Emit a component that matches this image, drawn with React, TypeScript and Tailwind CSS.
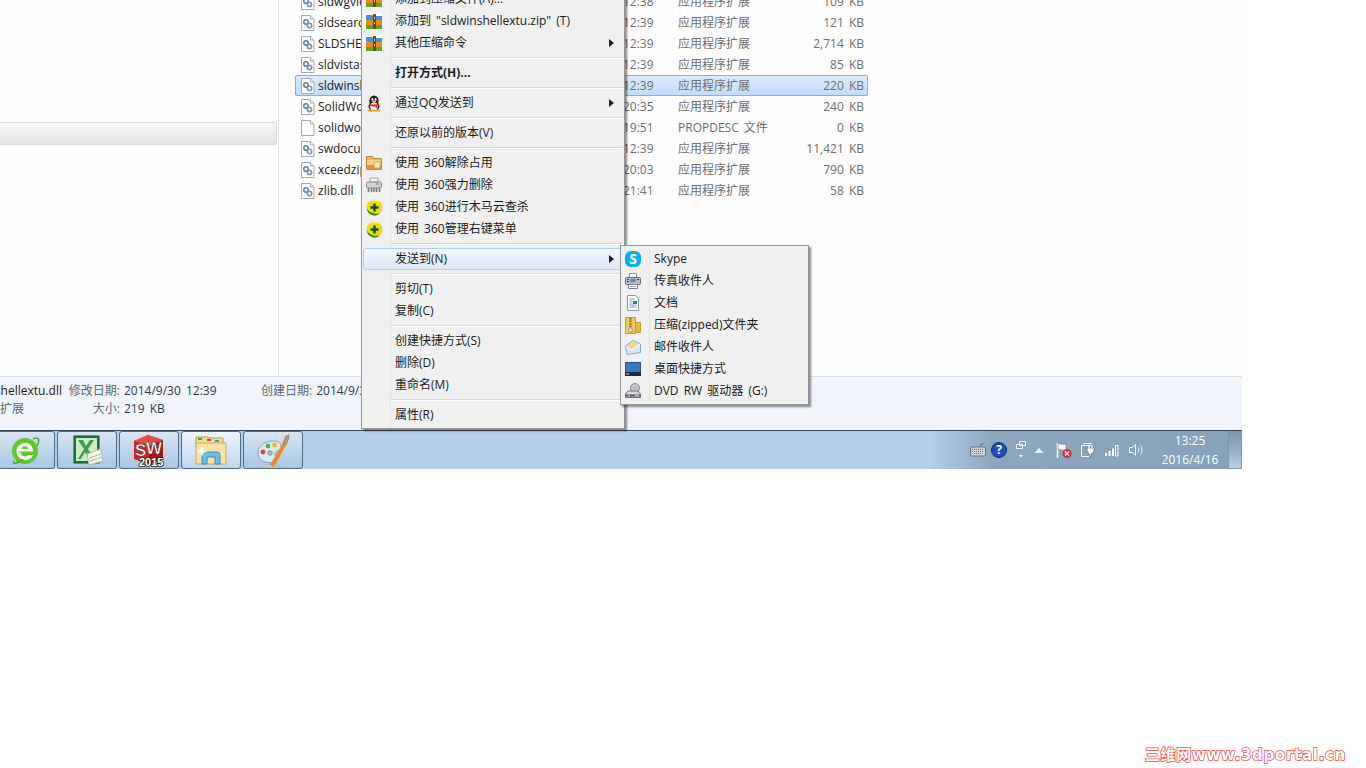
import type { ReactNode } from "react";

const files = [
  { name: "sldwgviewer.dll", time: "2014/9/30 12:38", type: "应用程序扩展", size: "109 KB" },
  { name: "sldsearchhost.dll", time: "2014/9/30 12:39", type: "应用程序扩展", size: "121 KB" },
  { name: "SLDSHELLEXTU.dll", time: "2014/9/30 12:39", type: "应用程序扩展", size: "2,714 KB" },
  { name: "sldvistashell.dll", time: "2014/9/30 12:39", type: "应用程序扩展", size: "85 KB" },
  { name: "sldwinshellextu.dll", time: "2014/9/30 12:39", type: "应用程序扩展", size: "220 KB", selected: true },
  { name: "SolidWorks.dll", time: "2014/8/12 20:35", type: "应用程序扩展", size: "240 KB" },
  { name: "solidworks.propdesc", time: "2014/6/18 19:51", type: "PROPDESC 文件", size: "0 KB", blank: true },
  { name: "swdocumentmgr.dll", time: "2014/9/30 12:39", type: "应用程序扩展", size: "11,421 KB" },
  { name: "xceedzip.dll", time: "2013/7/11 20:03", type: "应用程序扩展", size: "790 KB" },
  { name: "zlib.dll", time: "2012/5/21 21:41", type: "应用程序扩展", size: "58 KB" },
];

function FileIcon({ blank }: { blank?: boolean }) {
  return (
    <svg width="16" height="16" viewBox="0 0 16 16" className="shrink-0">
      <path d="M.5 .5h9l3.500 3.500v11.500H.5z" fill="#fff" stroke="#a3a9b0" />
      <path d="M9.500 .5v3.500h3.500" fill="#eef1f4" stroke="#a3a9b0" />
      {!blank && (
        <g fill="none" strokeLinecap="round">
          <circle cx="5" cy="7" r="2.200" stroke="#5b7a9c" strokeWidth="1.500" />
          <circle cx="8.500" cy="10.500" r="2.200" stroke="#7c8fa6" strokeWidth="1.500" />
          <circle cx="5" cy="7" r=".6" fill="#dbe7f3" />
        </g>
      )}
    </svg>
  );
}

function RarIcon() {
  return (
    <svg width="16" height="16" viewBox="0 0 16 16">
      <rect x="0" y="0" width="16" height="16" fill="#fdfdfd" />
      <path d="M0 2h6l1 1h9v4H0z" fill="#3f94d8" />
      <rect y="7" width="16" height="5" fill="#e98a25" />
      <rect y="12" width="16" height="4" fill="#5da52a" />
      <rect x="7" y="1" width="3" height="15" fill="#6d4a23" />
      <rect x="8" y="4" width="1" height="2" fill="#e7c98f" />
      <rect x="8" y="9" width="1" height="2" fill="#e7c98f" />
    </svg>
  );
}

function QQIcon() {
  return (
    <svg width="16" height="17" viewBox="0 0 16 17">
      <ellipse cx="8" cy="6" rx="4.600" ry="5.600" fill="#1c1c1c" />
      <ellipse cx="8" cy="11.500" rx="5.500" ry="4.500" fill="#222" />
      <ellipse cx="8" cy="11.500" rx="3.800" ry="4" fill="#fff" />
      <ellipse cx="6.400" cy="4.400" rx="1" ry="1.300" fill="#fff" />
      <ellipse cx="9.600" cy="4.400" rx="1" ry="1.300" fill="#fff" />
      <ellipse cx="8" cy="6.400" rx="2.400" ry="1" fill="#f3b11a" />
      <path d="M3 8.400c3 1.400 7 1.400 10 0l.4 1.600-2.200 1 .6 3.400-2.800-3c-2.400.2-4.600-.4-6.200-1.200z" fill="#e0301e" />
      <ellipse cx="4.600" cy="15.600" rx="3" ry="1.200" fill="#f3a11a" />
      <ellipse cx="11.400" cy="15.600" rx="3" ry="1.200" fill="#f3a11a" />
    </svg>
  );
}

function Folder360Icon() {
  return (
    <svg width="16" height="16" viewBox="0 0 16 16">
      <path d="M.5 1.500h6l1.500 2h7.500v11H.5z" fill="#e9b45a" stroke="#b98a45" />
      <rect x="1" y="5" width="14" height="9" fill="#f6cf7e" />
      <rect x="1" y="10" width="14" height="4" fill="#e58f3e" />
      <rect x="8" y="7" width="6" height="6" rx="1" fill="#f7e9c7" stroke="#d58b3a" strokeWidth=".7" />
    </svg>
  );
}

function ShredIcon() {
  return (
    <svg width="16" height="16" viewBox="0 0 16 16">
      <path d="M4 1h8v4H4z" fill="#f4f4f4" stroke="#a5a5a5" />
      <rect x=".5" y="5" width="15" height="6" rx="1.500" fill="#d2d2d2" stroke="#8b8b8b" />
      <rect x="10" y="6.500" width="3" height="1" fill="#d9534f" />
      <path d="M2.500 11.500v3M5.500 11.500v3M8 11.500v3M10.500 11.500v3M13.500 11.500v3" stroke="#777" strokeWidth="1.600" strokeLinecap="round" />
    </svg>
  );
}

function Guard360Icon() {
  return (
    <svg width="17" height="17" viewBox="0 0 17 17">
      <circle cx="8.500" cy="8.500" r="8" fill="#ecdc12" />
      <path d="M.8 9.500A8 8 0 0 0 14 14.500C10 15.500 4 14.500.8 9.500z" fill="#2f8f1f" />
      <path d="M3 3A8 8 0 0 1 14.500 3C10 1.800 6 1.800 3 3z" fill="#f6f08a" />
      <path d="M8.500 4.500v8M4.500 8.500h8" stroke="#14501a" strokeWidth="2.400" />
    </svg>
  );
}

function SkypeIcon() {
  return (
    <span className="flex h-4 w-4 items-center justify-center rounded-[6px] bg-[#00aff0] text-[14px] leading-none font-bold text-white">S</span>
  );
}

function FaxIcon() {
  return (
    <svg width="16" height="16" viewBox="0 0 16 16">
      <path d="M4.500 .5h7v4h-7z" fill="#fff" stroke="#8d9299" />
      <rect x=".5" y="4.500" width="15" height="7" rx="1" fill="#b9bec4" stroke="#646a71" />
      <rect x="5.500" y="6" width="5" height="3" fill="#3c8dd3" />
      <rect x="2" y="6" width="2" height="1" fill="#3c4248" />
      <rect x="2" y="8" width="2" height="1" fill="#3c4248" />
      <rect x="12" y="6" width="2" height="1" fill="#3c4248" />
      <path d="M3.500 11.500h9v4h-9z" fill="#fff" stroke="#7b8087" />
      <path d="M5 13.500h6" stroke="#9ba0a6" />
    </svg>
  );
}

function DocIcon() {
  return (
    <svg width="16" height="16" viewBox="0 0 16 16">
      <path d="M2.500 .5h8l3 3v12h-11z" fill="#f9fbfe" stroke="#8f99a8" />
      <path d="M4.500 4h5M4.500 6h3M4.500 8h3M4.500 10h7M4.500 12h7" stroke="#8e9bb0" />
      <rect x="8" y="6" width="4" height="3" fill="#2e74c0" />
    </svg>
  );
}

function ZipIcon() {
  return (
    <svg width="16" height="17" viewBox="0 0 16 17">
      <path d="M.5 .5h10v16H.5z" fill="#f0c75d" stroke="#c79a35" />
      <path d="M10.500 5.500h5v10h-5z" fill="#e6b64a" stroke="#c79a35" />
      <path d="M5.500 1v13" stroke="#7d6b3c" strokeWidth="2.200" strokeDasharray="1.500 1" />
      <rect x="4" y="11" width="3" height="4" fill="#f7f3e5" stroke="#6c6c6c" strokeWidth=".6" />
    </svg>
  );
}

function MailIcon() {
  return (
    <svg width="16" height="16" viewBox="0 0 16 16">
      <path d="M.5 7 8 1.500 15.500 5v8.500L2 15.500z" fill="#d5e5f4" stroke="#93a9c1" />
      <path d="M3 7c2-4 7-5 10-2l-4 4-3 1z" fill="#f7d583" />
      <path d="M1 8l6 3 8-6" fill="none" stroke="#fff" />
    </svg>
  );
}

function DesktopIcon() {
  return (
    <svg width="16" height="14" viewBox="0 0 16 14">
      <rect width="16" height="14" fill="#28538c" />
      <rect x="1" y="1" width="14" height="9" fill="#3a79bd" />
      <rect y="10" width="16" height="4" fill="#1a2c44" />
      <rect x="1" y="11" width="3" height="2" fill="#d9542f" />
      <rect x="2.500" y="11.500" width="1.500" height="1.500" fill="#50a0e0" />
    </svg>
  );
}

function DvdIcon() {
  return (
    <svg width="16" height="16" viewBox="0 0 16 16">
      <circle cx="10" cy="5" r="4.500" fill="#c8ccd0" stroke="#7b8085" />
      <circle cx="10" cy="5" r="1.200" fill="#fff" stroke="#777" strokeWidth=".6" />
      <path d="M3 8h10l2.500 3v3.500H.5V11z" fill="#d7d9db" stroke="#6a6e72" />
      <path d="M1 11.500h14v2H1z" fill="#4b4f53" />
      <rect x="3" y="12" width="2" height="1" fill="#6fd24c" />
      <rect x="10" y="12" width="4" height="1" fill="#c6c8ca" />
    </svg>
  );
}

function Arrow() {
  return <span className="h-0 w-0 border-y-[4px] border-l-[5px] border-y-transparent border-l-[#222]" />;
}

function MenuRow({ icon, label, bold, arrow, active }: { icon?: ReactNode; label: string; bold?: boolean; arrow?: boolean; active?: boolean }) {
  return (
    <div className={`flex h-[22px] items-center rounded-[3px] border leading-[18px] ${active ? "border-[#aecff7] bg-gradient-to-b from-[#f4f8fe] to-[#dde8f8]" : "border-transparent"}`}>
      <span className="flex w-[30px] shrink-0 items-center pl-[2px]">{icon}</span>
      <span className={`flex-1 pl-[1px] ${bold ? "font-bold" : ""}`}>{label}</span>
      {arrow && <span className="mr-[8px] flex items-center"><Arrow /></span>}
    </div>
  );
}

function Sep() {
  return (
    <div className="flex h-[8px] flex-col justify-center pl-[28px]">
      <div className="h-px bg-[#d7d7d7]" />
      <div className="h-px bg-white" />
    </div>
  );
}

function ContextMenu() {
  return (
    <div className="absolute top-[-14px] left-[361px] w-[264px] border border-[#979797] bg-[#f0f0f0] p-[1px] pb-[2px] text-[12px] text-[#1a1a1a] shadow-[2px_2px_2px_rgba(0,0,0,0.45)]">
      <div className="absolute top-0 bottom-0 left-[28px] w-px bg-[#e2e3e3]" />
      <div className="relative">
        <MenuRow icon={<RarIcon />} label="添加到压缩文件(A)..." />
        <MenuRow icon={<RarIcon />} label={'添加到 "sldwinshellextu.zip" (T)'} />
        <MenuRow icon={<RarIcon />} label="其他压缩命令" arrow />
        <Sep />
        <MenuRow label="打开方式(H)..." bold />
        <Sep />
        <MenuRow icon={<QQIcon />} label="通过QQ发送到" arrow />
        <Sep />
        <MenuRow label="还原以前的版本(V)" />
        <Sep />
        <MenuRow icon={<Folder360Icon />} label="使用 360解除占用" />
        <MenuRow icon={<ShredIcon />} label="使用 360强力删除" />
        <MenuRow icon={<Guard360Icon />} label="使用 360进行木马云查杀" />
        <MenuRow icon={<Guard360Icon />} label="使用 360管理右键菜单" />
        <Sep />
        <MenuRow label="发送到(N)" arrow active />
        <Sep />
        <MenuRow label="剪切(T)" />
        <MenuRow label="复制(C)" />
        <Sep />
        <MenuRow label="创建快捷方式(S)" />
        <MenuRow label="删除(D)" />
        <MenuRow label="重命名(M)" />
        <Sep />
        <MenuRow label="属性(R)" />
      </div>
    </div>
  );
}

const sendTo: { label: string; icon: ReactNode }[] = [
  { label: "Skype", icon: <SkypeIcon /> },
  { label: "传真收件人", icon: <FaxIcon /> },
  { label: "文档", icon: <DocIcon /> },
  { label: "压缩(zipped)文件夹", icon: <ZipIcon /> },
  { label: "邮件收件人", icon: <MailIcon /> },
  { label: "桌面快捷方式", icon: <DesktopIcon /> },
  { label: "DVD RW 驱动器 (G:)", icon: <DvdIcon /> },
];

function SendToMenu() {
  return (
    <div className="absolute top-[245px] left-[620px] w-[189px] border border-[#979797] bg-[#f0f0f0] py-[2px] text-[12px] text-[#1a1a1a] shadow-[2px_2px_2px_rgba(0,0,0,0.45)]">
      <div className="absolute top-[2px] bottom-[2px] left-[28px] w-px bg-[#e2e3e3]" />
      {sendTo.map((item) => (
        <div key={item.label} className="flex h-[22px] items-center leading-[18px]">
          <span className="ml-[4px] flex w-[16px] shrink-0 justify-center">{item.icon}</span>
          <span className="ml-[13px]">{item.label}</span>
        </div>
      ))}
    </div>
  );
}

function FileRow({ file }: { file: (typeof files)[number] }) {
  return (
    <div className={`grid h-[21px] w-[573px] grid-cols-[17px_243px_117px_1fr] items-center rounded-[2px] border pr-[3px] pl-[5px] leading-[18px] ${file.selected ? "border-[#84acdd] bg-gradient-to-b from-[#dcebfc] to-[#c1dcfc]" : "border-transparent"}`}>
      <FileIcon blank={file.blank} />
      <span className="truncate text-[#1c1c1c]">{file.name}</span>
      <span className="text-[#6d6d6d]">{file.time}</span>
      <div className="flex justify-between text-[#6d6d6d]">
        <span>{file.type}</span>
        <span>{file.size}</span>
      </div>
    </div>
  );
}

function ExcelIcon() {
  return (
    <svg width="32" height="32" viewBox="0 0 32 32">
      <rect x="3" y="2" width="25" height="27" fill="#1d7a3e" stroke="#0f5a2a" />
      <rect x="5" y="4" width="21" height="23" fill="#cfe8c8" />
      <path d="M7 6h5l3 6 4-6h4l-6 9 6 10h-5l-4-7-4 7H7l6-10z" fill="#3f9a4d" />
      <path d="M16 20l14-5 2 12-14 4z" fill="#f4f8f0" stroke="#a8c49c" />
      <path d="M18 24l12-4M19 27l12-4" stroke="#9dc08f" />
    </svg>
  );
}

function IeIcon() {
  return (
    <svg width="32" height="32" viewBox="0 0 32 32">
      <circle cx="16" cy="17" r="13" fill="#62c62c" />
      <path d="M8 17.500h16C24 11 20 9 16 9s-8.500 3-8.500 8.500S12 26 16 26c3.500 0 6.500-1.500 8-5h-5c-.8 1-1.800 1.500-3 1.500-2.500 0-4-1.700-4-3.500" fill="#fff" />
      <path d="M12.500 15h7c-.3-1.800-1.700-2.800-3.500-2.800s-3.200 1-3.500 2.800z" fill="#62c62c" />
      <path d="M5 27C3 31 8 30 14 25M24 5c6-3 7 1 4 7" fill="none" stroke="#4ea823" strokeWidth="1.600" />
    </svg>
  );
}

function SwIcon() {
  return (
    <svg width="34" height="34" viewBox="0 0 34 34">
      <path d="M2 8 16 2l15 5v19l-14 6-15-6z" fill="#d41f26" />
      <path d="M2 8l15 5 14-6-15-5z" fill="#ec4a48" />
      <path d="M17 13v19l14-6V7z" fill="#a8141b" />
      <text x="3" y="23" fontFamily="Liberation Sans" fontWeight="700" fontSize="17" fill="#fff" stroke="#333" strokeWidth=".5">S</text>
      <text x="14" y="21" fontFamily="Liberation Sans" fontWeight="700" fontSize="17" fill="#fff" stroke="#333" strokeWidth=".5">W</text>
      <text x="7" y="33" fontFamily="Liberation Sans" fontWeight="700" fontSize="11" fill="#fff" stroke="#222" strokeWidth="1.600" paintOrder="stroke">2015</text>
    </svg>
  );
}

function ExplorerIcon() {
  return (
    <svg width="32" height="32" viewBox="0 0 32 32">
      <path d="M1 3h12l1 1h14v9H1z" fill="#efdc9b" stroke="#b99e57" />
      <rect x="3" y="4" width="4" height="2" fill="#3fa83f" />
      <rect x="12" y="5" width="4" height="2" fill="#c9453a" />
      <rect x="20" y="6" width="4" height="2" fill="#3a8ed8" />
      <path d="M1 9h30v21H1z" fill="#f7e2a1" stroke="#c8ab62" />
      <path d="M7 30v-9a3 3 0 0 1 3-3h12a3 3 0 0 1 3 3v9h-5v-7h-8v7z" fill="#6ebbe6" stroke="#3a8ec2" />
      <path d="M7 12l1.500 4 4 1.500-4 1.500L7 23l-1.500-4-4-1.500 4-1.500z" fill="#fff" opacity=".85" />
    </svg>
  );
}

function PaintIcon() {
  return (
    <svg width="34" height="34" viewBox="0 0 34 34">
      <path d="M2 20C2 12 11 7 19 8c5 .6 7 4 6 7-1 4-6 2-6 6 0 3 4 4 1 7-5 4-18 1-18-8z" fill="#dbe7f2" stroke="#8ea2b8" />
      <circle cx="7" cy="19" r="2.400" fill="#d9483b" />
      <circle cx="12" cy="13" r="2.400" fill="#56b148" />
      <circle cx="18.500" cy="12" r="2.400" fill="#e8b832" />
      <circle cx="14" cy="20" r="2.200" fill="#a9c4de" stroke="#6f8cab" />
      <path d="M14 32 27 10l3 2-12 22z" fill="#ea8d1f" />
      <path d="M27 10l3-7 3-1-.5 4-2.500 6z" fill="#c79a63" stroke="#8d6a3e" strokeWidth=".6" />
    </svg>
  );
}

function TaskButton({ children, active, first }: { children: ReactNode; active?: boolean; first?: boolean }) {
  return (
    <div className={`flex h-[38px] w-[60px] shrink-0 items-center justify-center rounded-[3px] border border-[#4f6a87] ${first ? "ml-[-5px]" : ""} ${active ? "bg-gradient-to-b from-[#f0f5fb] to-[#bfd6ed]" : "bg-gradient-to-b from-[#d8e5f2] to-[#a9c6e3]"}`}>
      {children}
    </div>
  );
}

function Tray() {
  return (
    <div className="flex h-full w-[312px] items-center bg-gradient-to-r from-[#b3cfe9] via-[#8ca7bd] via-20% to-[#87a2b8] pl-[40px] text-white">
      <svg width="16" height="16" viewBox="0 0 16 16">
        <path d="M10 4c0-2 3-1 3-3" fill="none" stroke="#555" />
        <rect x=".5" y="5" width="15" height="9" rx="1" fill="#cfd3d6" stroke="#6c7176" />
        <path d="M2 7.500h12M2 9.500h12M4 11.500h8" stroke="#777" strokeDasharray="1 1" />
      </svg>
      <span className="ml-[5px] flex h-4 w-4 items-center justify-center rounded-full border border-[#0b2a74] bg-[#1f4fc0] text-[12px] leading-none font-bold text-white">?</span>
      <svg width="10" height="19" viewBox="0 0 10 19" className="ml-[9px]">
        <path d="M3.500 .5h6v4h-6zM.5 3.500h6v4h-6z" fill="#87a2b8" stroke="#fff" />
        <path d="M3 14h4l-2 2.500z" fill="#fff" />
      </svg>
      <svg width="10" height="5" viewBox="0 0 10 5" className="ml-[8px]">
        <path d="M5 0l4.500 5H.5z" fill="#f2f6fa" />
      </svg>
      <svg width="16" height="16" viewBox="0 0 16 16" className="ml-[12px]">
        <path d="M1.500 1v15" stroke="#fff" strokeWidth="1.500" />
        <path d="M2 2c3-1 4 1 8 0v6c-4 1-5-1-8 0z" fill="#fff" stroke="#555" strokeWidth=".5" />
        <circle cx="11" cy="11.500" r="4.500" fill="#d92b2b" />
        <path d="M9 9.500l4 4M13 9.500l-4 4" stroke="#fff" strokeWidth="1.300" />
      </svg>
      <svg width="16" height="16" viewBox="0 0 16 16" className="ml-[8px]">
        <path d="M1.500 3.500h8v11h-8z" fill="#87a2b8" stroke="#fff" />
        <path d="M3 1.500h8v2" fill="none" stroke="#fff" />
        <path d="M7 6h7v3l-2 3h-1v3H9.500v-3H9L7 9z" fill="#fff" stroke="#333" strokeWidth=".5" />
        <path d="M9 3.500V6M12 3.500V6" stroke="#fff" strokeWidth="1.200" />
      </svg>
      <svg width="16" height="16" viewBox="0 0 16 16" className="ml-[8px]">
        <path d="M1 11h2v3H1zM4.500 9h2v5h-2zM8 6.500h2V14H8z" fill="#fff" />
        <path d="M11.500 3.500h2.500V14h-2.500z" fill="none" stroke="#fff" />
      </svg>
      <svg width="16" height="16" viewBox="0 0 16 16" className="ml-[8px]">
        <path d="M1.500 5.500h3l3-3v11l-3-3h-3z" fill="#87a2b8" stroke="#fff" />
        <path d="M10 5.500c1 1.500 1 3.500 0 5M12.500 3.500c2 2.500 2 6.500 0 9" fill="none" stroke="#fff" />
      </svg>
      <div className="ml-[13px] flex w-[66px] flex-col items-center text-[12px] leading-[19px]">
        <span>13:25</span>
        <span>2016/4/16</span>
      </div>
      <div className="ml-[5px] h-full w-[14px] border border-[#7f97ab] bg-gradient-to-b from-[#7d97ab] via-[#93adc2] to-[#b9d2e8]" />
    </div>
  );
}

export default function App() {
  return (
    <div className="relative flex h-[768px] w-[1366px] flex-col overflow-hidden bg-white font-['Open_Sans','Noto_Sans_CJK_SC',sans-serif] text-[12px] [word-spacing:2px]">
      <div className="flex h-[469px] w-[1242px] shrink-0 flex-col overflow-hidden">
        <div className="flex h-[376px] shrink-0 bg-[#fdfdfd]">
          <div className="flex h-full w-[279px] shrink-0 flex-col border-r border-[#d6e5f5] pt-[122px]">
            <div className="ml-[-4px] h-[23px] w-[281px] rounded-[2px] border border-[#d9d9d9] bg-gradient-to-b from-[#f7f7f7] to-[#e4e4e4]" />
          </div>
          <div className="mt-[-9px] ml-[16px] flex flex-col">
            {files.map((file) => (
              <FileRow key={file.name} file={file} />
            ))}
          </div>
        </div>
        <div className="grid h-[54px] shrink-0 grid-cols-[62px_54px_137px_1fr] content-start gap-x-[4px] border-t border-[#cfdff0] bg-[#f1f5fb] pt-[5px] leading-[18px] text-[#5a6779]">
          <span className="flex justify-end overflow-hidden whitespace-nowrap text-[#1c1c1c]">sldwinshellextu.dll</span>
          <span className="text-right">修改日期:</span>
          <span className="text-[#2b3a4f]">2014/9/30 12:39</span>
          <span className="flex whitespace-nowrap"><span className="mr-[4px] ml-[-4px]">创建日期:</span><span className="text-[#2b3a4f]">2014/9/30 12:39</span></span>
          <span className="flex justify-start overflow-hidden whitespace-nowrap">扩展</span>
          <span className="text-right">大小:</span>
          <span className="text-[#2b3a4f]">219 KB</span>
        </div>
        <div className="flex h-[39px] shrink-0 items-center justify-between border-t border-[#36475a] bg-[#b3cfea]">
          <div className="flex items-center gap-[2px]">
            <TaskButton first><IeIcon /></TaskButton>
            <TaskButton><ExcelIcon /></TaskButton>
            <TaskButton><SwIcon /></TaskButton>
            <TaskButton active><ExplorerIcon /></TaskButton>
            <TaskButton><PaintIcon /></TaskButton>
          </div>
          <Tray />
        </div>
      </div>
      <div className="flex flex-1 items-end justify-end pr-[20px] pb-[3px]">
        <span className="font-['DejaVu_Sans','Noto_Sans_CJK_SC',sans-serif] text-[15px] leading-[20px] font-bold tracking-[0.7px] text-white [-webkit-text-stroke:1.5px_#f0484d] [paint-order:stroke_fill] [word-spacing:0]">三维网www.3dportal.cn</span>
      </div>
      <ContextMenu />
      <SendToMenu />
    </div>
  );
}
